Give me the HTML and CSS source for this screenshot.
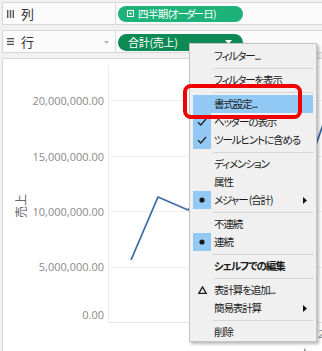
FILE: index.html
```html
<!DOCTYPE html>
<html lang="ja">
<head>
<meta charset="utf-8">
<title>Tableau shelf menu</title>
<link rel="stylesheet" href="styles.css">
</head>
<body>
<div class="app">
  <div class="shelves">
    <div class="shelf">
      <div class="shelf-label">
        <svg class="shelf-icon" width="7" height="8" viewBox="0 0 7 8"><rect x="0" y="0" width="1.4" height="8" fill="#555"/><rect x="2.8" y="0" width="1.4" height="8" fill="#555"/><rect x="5.6" y="0" width="1.4" height="8" fill="#555"/></svg>
        <span class="shelf-name">列</span>
      </div>
      <div class="shelf-pills">
        <div class="pill pill-light">
          <svg class="pill-icon" width="7" height="7" viewBox="0 0 7 7"><rect x="0.5" y="0.5" width="6" height="6" fill="none" stroke="#fff" stroke-width="1"/><rect x="2.5" y="2.5" width="2" height="2" fill="#fff"/></svg>
          <span class="pill-text">四半期<span class="kana">(オーダー</span>日)</span>
        </div>
      </div>
    </div>
    <div class="shelf">
      <div class="shelf-label">
        <svg class="shelf-icon" width="7" height="7" viewBox="0 0 7 7"><rect x="0" y="0" width="7" height="1.3" fill="#555"/><rect x="0" y="2.85" width="7" height="1.3" fill="#555"/><rect x="0" y="5.7" width="7" height="1.3" fill="#555"/></svg>
        <span class="shelf-name">行</span>
        <svg class="caret" width="5" height="3" viewBox="0 0 5 3"><path d="M0 0 L5 0 L2.5 3 Z" fill="#b5b5b5"/></svg>
      </div>
      <div class="shelf-pills">
        <div class="pill pill-dark">
          <span class="pill-text">合計(売上)</span>
          <svg class="pill-drop" width="7" height="4" viewBox="0 0 7 4"><path d="M0 0 L7 0 L3.5 4 Z" fill="#fff"/></svg>
        </div>
      </div>
    </div>
  </div>
  <div class="chart">
    <svg class="plot" width="319" height="293" viewBox="3 58 319 293">
      <line x1="108.5" y1="64" x2="108.5" y2="322" stroke="#ececec" stroke-width="1"/>
      <g stroke="#f1f1f1" stroke-width="1">
        <line x1="109" y1="99.5" x2="322" y2="99.5"/>
        <line x1="109" y1="155.5" x2="322" y2="155.5"/>
        <line x1="109" y1="210.5" x2="322" y2="210.5"/>
        <line x1="109" y1="266.5" x2="322" y2="266.5"/>
      </g>
      <line x1="109" y1="321.5" x2="322" y2="321.5" stroke="#e6e6e6" stroke-width="1"/>
      <g class="ylab" text-anchor="end">
        <text x="104" y="104">20,000,000.00</text>
        <text x="104" y="159.5">15,000,000.00</text>
        <text x="104" y="214.5">10,000,000.00</text>
        <text x="104" y="270">5,000,000.00</text>
        <text x="104" y="318">0.00</text>
      </g>
      <text class="ytitle" transform="translate(26,205) rotate(-90)" text-anchor="middle">売上</text>
      <polyline points="131,259 158,196 188,209 220,172 250,150 285,166 313,152 325,118" fill="none" stroke="#3f6da3" stroke-width="1.8" stroke-linejoin="round"/>
      <text class="xtick" x="318" y="337">2</text>
      <text class="xtitle" x="298" y="357">オーダ</text>
    </svg>
  </div>

  <div class="menu">
    <div class="mi"><span class="ic"></span><span class="tx">フィルター...</span></div>
    <div class="sep"></div>
    <div class="mi"><span class="ic"></span><span class="tx">フィルターを表示</span></div>
    <div class="sep"></div>
    <div class="mi hl"><span class="ic"></span><span class="tx">書式設定...</span></div>
    <div class="mi"><span class="ic on"><svg width="10" height="8" viewBox="0 0 10 8"><path d="M1 4.2 L3.8 7 L9 1" fill="none" stroke="#222" stroke-width="1.3"/></svg></span><span class="tx">ヘッダーの表示</span></div>
    <div class="mi"><span class="ic on"><svg width="10" height="8" viewBox="0 0 10 8"><path d="M1 4.2 L3.8 7 L9 1" fill="none" stroke="#222" stroke-width="1.3"/></svg></span><span class="tx">ツールヒントに含める</span></div>
    <div class="sep"></div>
    <div class="mi"><span class="ic"></span><span class="tx">ディメンション</span></div>
    <div class="mi"><span class="ic"></span><span class="tx">属性</span></div>
    <div class="mi"><span class="ic on"><svg width="6" height="6" viewBox="0 0 6 6"><circle cx="3" cy="3" r="2.6" fill="#1a1a1a"/></svg></span><span class="tx">メジャー&nbsp;(合計)</span><span class="sub"><svg width="4" height="7" viewBox="0 0 4 7"><path d="M0 0 L4 3.5 L0 7 Z" fill="#111"/></svg></span></div>
    <div class="sep"></div>
    <div class="mi"><span class="ic"></span><span class="tx">不連続</span></div>
    <div class="mi"><span class="ic on"><svg width="6" height="6" viewBox="0 0 6 6"><circle cx="3" cy="3" r="2.6" fill="#1a1a1a"/></svg></span><span class="tx">連続</span></div>
    <div class="sep"></div>
    <div class="mi"><span class="ic"></span><span class="tx bold">シェルフでの編集</span></div>
    <div class="sep"></div>
    <div class="mi"><span class="ic"><svg width="9" height="8" viewBox="0 0 9 8"><path d="M4.5 0.9 L8.2 7.3 L0.8 7.3 Z" fill="none" stroke="#1a1a1a" stroke-width="1.3"/></svg></span><span class="tx">表計算を追加...</span></div>
    <div class="mi"><span class="ic"></span><span class="tx">簡易表計算</span><span class="sub"><svg width="4" height="7" viewBox="0 0 4 7"><path d="M0 0 L4 3.5 L0 7 Z" fill="#111"/></svg></span></div>
    <div class="sep"></div>
    <div class="mi"><span class="ic"></span><span class="tx">削除</span></div>
  </div>
  <div class="callout"></div>
</div>
</body>
</html>
```

FILE: styles.css
```css
html, body {
  margin: 0;
  padding: 0;
}

body {
  width: 322px;
  height: 351px;
  overflow: hidden;
  background: #f1f1f1;
  font-family: "Noto Sans CJK JP", "Noto Sans", sans-serif;
  color: #1a1a1a;
}

.app {
  position: relative;
  height: 351px;
  padding: 2px 0 0 2px;
  box-sizing: border-box;
  display: flex;
  flex-direction: column;
  gap: 5px;
}

.shelves {
  display: flex;
  flex-direction: column;
  gap: 5px;
}

.shelf {
  height: 23px;
  box-sizing: border-box;
  border: 1px solid #d7d7d7;
  border-right: none;
  background: #fbfbfb;
  display: grid;
  grid-template-columns: 113px 1fr;
}

.shelf-label {
  border-right: 1px solid #dadada;
  display: flex;
  align-items: center;
  padding-left: 4px;
  gap: 7px;
}

.shelf-icon {
  display: block;
  flex: none;
}

.shelf-name {
  font-size: 13px;
  line-height: 16px;
  color: #333;
}

.caret {
  display: block;
  margin-left: auto;
  margin-right: 6px;
  margin-top: 2px;
}

.shelf-pills {
  display: flex;
  align-items: center;
  padding-left: 2px;
  min-width: 0;
}

.pill {
  flex: none;
  width: 125px;
  min-width: 0;
  overflow: hidden;
  box-sizing: border-box;
  display: flex;
  align-items: center;
  color: #fff;
  font-size: 11px;
  font-feature-settings: "palt" 1;
}

.pill-text {
  line-height: 15px;
  white-space: nowrap;
}

.pill-light {
  height: 16px;
  border-radius: 8px;
  background: #1db27a;
  padding-left: 9px;
  gap: 4px;
}

.pill-light .pill-text {
  font-size: 10.5px;
  letter-spacing: -0.6px;
}

.pill-light .kana {
  letter-spacing: -1.8px;
  margin-right: 1px;
}

.pill-icon {
  display: block;
  flex: none;
}

.pill-dark {
  height: 17px;
  margin-top: 1px;
  border-radius: 9px;
  background: #0e8a55;
  padding-left: 10px;
  padding-right: 11px;
  justify-content: space-between;
}

.pill-dark .pill-text {
  letter-spacing: -0.3px;
}

.pill-drop {
  display: block;
  flex: none;
}

.chart {
  flex: 1;
  background: #fff;
  border-left: 1px solid #d7d7d7;
  border-top: 1px solid #d7d7d7;
  overflow: hidden;
}

.plot {
  display: block;
}

.ylab text {
  font-family: "Open Sans", "Liberation Sans", sans-serif;
  font-size: 11px;
  fill: #8a8a8a;
}

.ytitle {
  font-family: "Noto Sans CJK JP", sans-serif;
  font-size: 12px;
  fill: #666;
}

.xtick {
  font-family: "Open Sans", sans-serif;
  font-size: 11px;
  fill: #8a8a8a;
}

.xtitle {
  font-family: "Noto Sans CJK JP", sans-serif;
  font-size: 11px;
  fill: #444;
}

.menu {
  position: absolute;
  left: 189px;
  top: 43px;
  width: 128px;
  box-sizing: border-box;
  padding: 3px 3px 0;
  background: #f0f0f0;
  border: 1px solid #c4c4c4;
  box-shadow: 2px 2px 3px rgba(0, 0, 0, 0.28);
  font-size: 10.5px;
  font-feature-settings: "palt" 1;
  letter-spacing: -1.1px;
  color: #1a1a1a;
}

.mi {
  height: 18px;
  display: grid;
  grid-template-columns: 18px minmax(0, 1fr) 16px;
  align-items: center;
}

.mi.hl {
  background: #93c9f5;
}

.ic {
  height: 18px;
  display: flex;
  align-items: center;
  justify-content: center;
}

.ic svg {
  display: block;
}

.ic.on {
  background: #93c9f5;
}

.tx {
  padding-left: 3px;
  line-height: 18px;
  white-space: nowrap;
}

.tx.bold {
  font-weight: 700;
}

.sub {
  display: flex;
  align-items: center;
  padding-left: 6px;
}

.sub svg {
  display: block;
}

.sep {
  height: 6px;
  display: flex;
  align-items: center;
  padding-left: 20px;
}

.sep::before {
  content: "";
  display: block;
  width: 100%;
  height: 1px;
  background: #d6d6d6;
}

.callout {
  position: absolute;
  left: 183px;
  top: 84px;
  width: 119px;
  height: 35px;
  box-sizing: border-box;
  border: 4px solid #f00000;
  border-radius: 8px;
}
```
